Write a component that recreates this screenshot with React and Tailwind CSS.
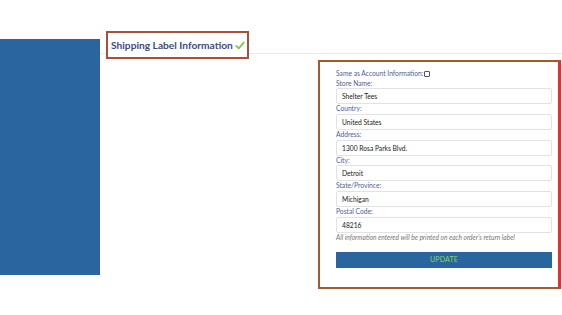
import React from "react";

const fields = [
  { label: "Store Name:", value: "Shelter Tees" },
  { label: "Country:", value: "United States" },
  { label: "Address:", value: "1300 Rosa Parks Blvd." },
  { label: "City:", value: "Detroit" },
  { label: "State/Province:", value: "Michigan" },
  { label: "Postal Code:", value: "48216" },
];

const Check = () => (
  <svg width="10" height="9" viewBox="0 0 12 10" className="ml-[2px] mt-[1px]">
    <path d="M1.5 5.5 L4.5 8.5 L10.5 1.5" fill="none" stroke="#8bc34a" strokeWidth="2.2" strokeLinecap="round" strokeLinejoin="round" />
  </svg>
);

export default function App() {
  return (
    <div className="flex w-full h-[315px] bg-white font-['Lato',sans-serif] overflow-hidden">
      <div className="w-[100px] shrink-0 mt-[39px] h-[236px] bg-[#2b65a0] border-r border-[#45559a]"></div>

      <div className="flex-1 flex flex-col">
        <div className="mt-[31px] h-[23px] border-b border-[#ebebef] pl-[6px]">
          <div className="inline-flex items-center h-[28px] pl-[3px] pr-[2px] border-2 border-[#a9503a] bg-white">
            <span className="text-[10.2px] font-bold text-[#3e4a7c] leading-none">Shipping Label Information</span>
            <Check />
          </div>
        </div>

        <div className="ml-[218px] mt-[6px] w-[243px] h-[229px] border-2 border-[#a45a30] border-r-[3px] border-r-[#ef2b2b] bg-white pl-[16px] pr-[6px] pt-[7px]">
          <div className="flex items-center text-[6.7px] leading-[9.5px] text-[#4e5e9c]">
            Same as Account Information:
            <span className="ml-[1px] w-[6px] h-[6px] border border-[#555] rounded-[1px] bg-white"></span>
          </div>
          {fields.map((f) => (
            <div key={f.label}>
              <div className="text-[6.7px] leading-[9.7px] text-[#4e5e9c]">{f.label}</div>
              <div className="h-[16px] border border-[#e2e2e6] rounded-[2px] flex items-center pl-[5px] text-[6.7px] text-[#222]">
                {f.value}
              </div>
            </div>
          ))}
          <div className="text-[6.6px] italic text-[#777] leading-[9px]">
            All information entered will be printed on each order's return label
          </div>
          <div className="mt-[10px] h-[16px] bg-[#2b65a0] flex items-center justify-center text-[7px] text-[#8fd35a] tracking-wide">
            UPDATE
          </div>
        </div>
      </div>
    </div>
  );
}
